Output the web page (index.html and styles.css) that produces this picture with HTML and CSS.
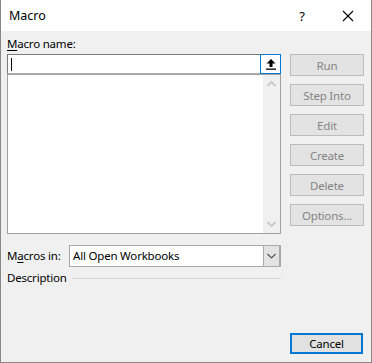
FILE: index.html
```html
<!DOCTYPE html>
<html lang="en">
<head>
    <meta charset="UTF-8">
    <meta name="viewport" content="width=device-width, initial-scale=1.0">
    <title>Macro</title>
    <link rel="stylesheet" href="styles.css">
</head>
<body>

    <div class="dialog">
        <div class="titlebar">
            <span class="title">Macro</span>
            <span class="help">?</span>
            <span class="close">
                <svg width="12" height="12" viewBox="0 0 12 12"><path d="M1 1 L11 11 M11 1 L1 11" stroke="#000" stroke-width="1.1" fill="none"/></svg>
            </span>
        </div>

        <div class="content">
            <div class="main">
                <div class="left">
                    <div class="field-label"><u>M</u>acro name:</div>
                    <div class="name-input">
                        <span class="caret"></span>
                        <span class="ref-btn">
                            <svg width="12" height="12" viewBox="0 0 12 12"><path d="M6 1 L10.5 5.5 L7.5 5.5 L7.5 9 L4.5 9 L4.5 5.5 L1.5 5.5 Z" fill="#000"/><rect x="1" y="10.5" width="10" height="1.3" fill="#000"/></svg>
                        </span>
                    </div>
                    <div class="list">
                        <div class="scrollbar">
                            <svg width="9" height="6" viewBox="0 0 9 6"><path d="M0.5 5 L4.5 1 L8.5 5" stroke="#c2c2c2" stroke-width="1.6" fill="none"/></svg>
                            <svg width="9" height="6" viewBox="0 0 9 6"><path d="M0.5 1 L4.5 5 L8.5 1" stroke="#c2c2c2" stroke-width="1.6" fill="none"/></svg>
                        </div>
                    </div>
                    <div class="macros-in">
                        <span class="field-label">M<u>a</u>cros in:</span>
                        <div class="combo">
                            <span class="combo-value">All Open Workbooks</span>
                            <span class="combo-drop">
                                <svg width="9" height="6" viewBox="0 0 9 6"><path d="M0.5 1 L4.5 5 L8.5 1" stroke="#555" stroke-width="1.2" fill="none"/></svg>
                            </span>
                        </div>
                    </div>
                    <div class="description">
                        <span>Description</span>
                        <span class="rule"></span>
                    </div>
                </div>

                <div class="buttons">
                    <button class="btn" disabled>Run</button>
                    <button class="btn" disabled>Step Into</button>
                    <button class="btn" disabled>Edit</button>
                    <button class="btn" disabled>Create</button>
                    <button class="btn" disabled>Delete</button>
                    <button class="btn" disabled>Options...</button>
                </div>
            </div>

            <div class="footer">
                <button class="btn cancel">Cancel</button>
            </div>
        </div>
    </div>

</body>
</html>
```

FILE: styles.css
```css
* {
    box-sizing: border-box;
}

body {
    margin: 0;
    padding: 0;
    font-family: "Noto Sans", "Open Sans", sans-serif;
    font-size: 11.5px;
    letter-spacing: -0.2px;
    color: #000;
}

.dialog {
    width: 372px;
    height: 363px;
    background: #f0f0f0;
    border-left: 1px solid #888;
    border-right: 1px solid #888;
    border-bottom: 1px solid #888;
    display: flex;
    flex-direction: column;
}

.titlebar {
    height: 31px;
    background: #fff;
    display: flex;
    align-items: center;
    padding-left: 8px;
}

.title {
    flex: 1;
    font-size: 12.5px;
    letter-spacing: 0;
}

.help {
    width: 46px;
    text-align: center;
    font-size: 13px;
}

.close {
    width: 46px;
    display: flex;
    justify-content: center;
}

.content {
    flex: 1;
    display: flex;
    flex-direction: column;
    padding: 5px 7px 8px 6px;
}

.main {
    display: flex;
    gap: 9px;
}

.left {
    width: 274px;
    display: flex;
    flex-direction: column;
}

.field-label {
    line-height: 16px;
    height: 16px;
}

u {
    text-underline-offset: 2px;
}

.left > .field-label {
    margin-bottom: 2px;
}

.name-input {
    height: 20px;
    background: #fff;
    border: 1px solid #7a7a7a;
    border-bottom-color: #b0b0b0;
    display: flex;
    align-items: center;
    justify-content: space-between;
    padding-left: 3px;
}

.caret {
    width: 1px;
    height: 13px;
    background: #000;
}

.ref-btn {
    width: 21px;
    height: 20px;
    margin-right: -1px;
    border: 1px solid #0078d7;
    background: #fff;
    display: flex;
    align-items: center;
    justify-content: center;
}

.list {
    height: 160px;
    background: #fff;
    border: 1px solid #a0a0a0;
    display: flex;
    justify-content: flex-end;
}

.scrollbar {
    width: 17px;
    background: #f0f0f0;
    display: flex;
    flex-direction: column;
    justify-content: space-between;
    align-items: center;
    padding: 6px 0 6px;
}

.macros-in {
    display: flex;
    align-items: center;
    margin-top: 11px;
}

.macros-in .field-label {
    width: 62px;
}

.combo {
    flex: 1;
    height: 22px;
    background: #fff;
    border: 1px solid #a8a8a8;
    display: flex;
    align-items: stretch;
}

.combo-value {
    flex: 1;
    padding-left: 3px;
    line-height: 20px;
}

.combo-drop {
    width: 17px;
    background: #e3e3e3;
    border-left: 1px solid #a8a8a8;
    border-right: 1px solid #a8a8a8;
    display: flex;
    align-items: center;
    justify-content: center;
}

.description {
    display: flex;
    align-items: center;
    margin-top: 3px;
    line-height: 16px;
}

.rule {
    flex: 1;
    height: 1px;
    background: #d5d5d5;
    margin-left: 6px;
}

.buttons {
    width: 74px;
    margin-top: 18px;
    display: flex;
    flex-direction: column;
    gap: 8px;
}

.btn {
    height: 22px;
    width: 74px;
    font-family: inherit;
    font-size: 11.5px;
    letter-spacing: -0.2px;
    background: #e1e1e1;
    border: 1px solid #adadad;
    color: #000;
    padding: 0;
}

.btn:disabled {
    background: #e3e3e3;
    border-color: #bcbcbc;
    color: #838383;
}

.footer {
    margin-top: auto;
    display: flex;
    justify-content: flex-end;
}

.cancel {
    height: 21px;
    width: 73px;
    border: 2px solid #0078d7;
    margin-right: 1px;
}
```
